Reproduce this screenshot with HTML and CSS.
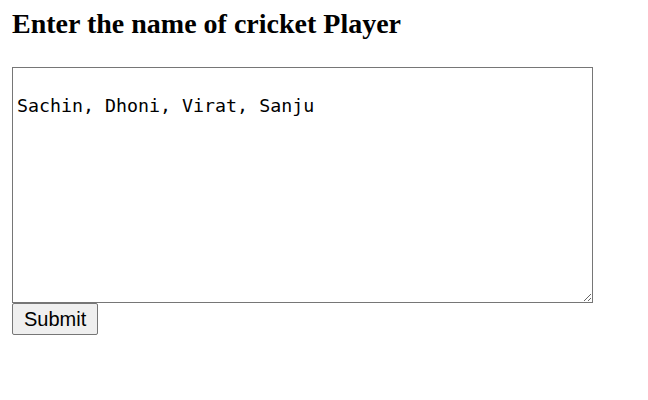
FILE: index.html
```html
<!DOCTYPE html>
<html>
<head>
<meta charset="utf-8">
<link rel="stylesheet" href="styles.css">
</head>
<body>
<h2 class="title">Enter the name of cricket Player</h2>
<form class="form">
<textarea class="players">

Sachin, Dhoni, Virat, Sanju</textarea>
<button type="button" class="submit">Submit</button>
</form>
</body>
</html>
```
FILE: styles.css
```css
html, body {
  background: #fff;
}
body {
  margin: 8px 12px;
  font-family: "Liberation Serif", serif;
}
.title {
  font-size: 28px;
  font-weight: bold;
  margin: 0 0 28px 0;
  line-height: 31px;
  color: #000;
}
.form {
  display: flex;
  flex-direction: column;
  align-items: flex-start;
}
.players {
  box-sizing: border-box;
  width: 581px;
  height: 236px;
  margin: 0;
  padding: 2px 3px 2px 4px;
  border: 1px solid #767676;
  font-family: "DejaVu Sans Mono", monospace;
  font-size: 18.3px;
  line-height: 24px;
  color: #000;
}
.submit {
  font-family: "Liberation Sans", Arial, sans-serif;
  font-size: 20px;
  padding: 1px 11px;
  height: 32px;
  border: 1px solid #767676;
  border-radius: 2px;
  background: #efefef;
  color: #000;
}
```
